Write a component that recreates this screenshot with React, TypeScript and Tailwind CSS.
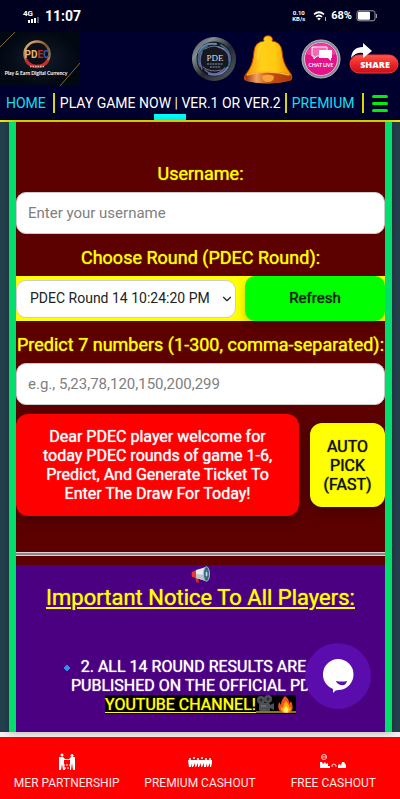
import React from "react";
import { ChevronDown } from "lucide-react";

function StatusBar() {
  return (
    <div className="flex h-8 items-center justify-between bg-[#00001f] pl-[23px] pr-[22px] text-white">
      <div className="flex items-center gap-1">
        <svg width="18" height="15" viewBox="0 0 18 15" role="img" aria-label="4G signal">
          <text x="0" y="7" fill="#fff" fontSize="8" fontWeight="700" fontFamily="Roboto, sans-serif">4G</text>
          <path d="M5 11h2v3H5zM8 10h2v4H8zM11 9h2v5h-2z" fill="#fff" />
          <path d="M14 8h2v6h-2z" fill="#55556a" />
        </svg>
        <span className="text-[14px] font-bold leading-4">11:07</span>
      </div>
      <div className="flex items-center gap-1">
        <div className="text-center text-[6px] font-bold leading-[6px]">
          0.10<br />KB/s
        </div>
        <svg width="14" height="12" viewBox="0 0 14 12" className="ml-1">
          <g fill="none" stroke="#fff" strokeWidth="1.7">
            <path d="M1 4.3Q6 .2 11 4.3" />
            <path d="M3 6.8Q6 4.2 9 6.8" />
          </g>
          <path d="M4.2 8.4Q6 7 7.8 8.4L6 10.5z" fill="#fff" />
          <path d="M12.5 7v4" stroke="#aab" strokeWidth="1" fill="none" />
        </svg>
        <span className="text-[11px] font-bold leading-4">68%</span>
        <svg width="22" height="12" viewBox="0 0 22 12">
          <rect x="1" y=".8" width="18" height="10" rx="2" fill="none" stroke="#9c9cab" />
          <rect x="2" y="1.8" width="12" height="8" rx="1" fill="#fff" />
          <path d="M20.5 4v4" stroke="#9c9cab" />
        </svg>
      </div>
    </div>
  );
}

function Logo() {
  return (
    <svg width="80" height="54" viewBox="0 0 80 54" role="img" aria-label="PDEC Play and Earn Digital Currency">
      <defs>
        <radialGradient id="logoBg">
          <stop offset="0" stopColor="#111c2b" />
          <stop offset="1" stopColor="#020812" />
        </radialGradient>
        <linearGradient id="gold" x1="0" y1="0" x2="1" y2="1">
          <stop offset="0" stopColor="#f5c777" />
          <stop offset=".5" stopColor="#80532c" />
          <stop offset="1" stopColor="#d09a50" />
        </linearGradient>
      </defs>
      <rect width="80" height="54" fill="url(#logoBg)" />
      <path d="M0 15L15 0M60 54L80 31" stroke="#8a7436" strokeWidth=".9" />
      <circle cx="37" cy="22" r="12.5" fill="#0a0e18" stroke="url(#gold)" strokeWidth="2.4" />
      <path d="M26 28a12.5 12.5 0 0 0 22 0" fill="none" stroke="#c62a2a" strokeWidth="3.5" />
      <path d="M30 34.5h14" stroke="#e5b9a0" strokeWidth="1.4" strokeDasharray="1.5 1" />
      <text x="37" y="26" textAnchor="middle" fontSize="10" fontWeight="700" fontFamily="Roboto, sans-serif" fill="#e3b778">
        PD<tspan fill="#c92d22">E</tspan><tspan fill="#3c5ba0">C</tspan>
      </text>
      <text x="36" y="43" textAnchor="middle" fontSize="5" fontWeight="700" fontFamily="Lato, sans-serif" fill="#fff">
        Play &amp; Earn Digital Currency
      </text>
    </svg>
  );
}

function CoinIcon() {
  return (
    <svg width="46" height="46" viewBox="0 0 46 46">
      <defs>
        <linearGradient id="coin" x1="0" y1="0" x2="1" y2="1">
          <stop offset="0" stopColor="#3c4148" />
          <stop offset=".25" stopColor="#858b91" />
          <stop offset=".55" stopColor="#25292f" />
          <stop offset="1" stopColor="#5c6167" />
        </linearGradient>
      </defs>
      <circle cx="23" cy="23" r="22" fill="url(#coin)" />
      <circle cx="23" cy="23" r="17.5" fill="#15181f" />
      <g fill="none" strokeLinecap="round">
        <path d="M8 17Q12 6 25 8M37 31Q31 41 18 38" stroke="#6686ae" strokeWidth="2" />
        <path d="M9 30Q4 17 16 10M30 9Q42 16 38 29" stroke="#376d83" strokeWidth="2" />
        <path d="M11 33Q7 24 11 16M27 11Q39 14 38 25M14 34Q24 43 34 32" stroke="#7462a7" strokeWidth="1.4" />
        <path d="M12 31Q19 37 30 34M14 13Q23 7 33 13" stroke="#8fa0b4" strokeWidth=".7" />
      </g>
      <text x="24" y="25" textAnchor="middle" fontSize="9" fontFamily="Liberation Serif, serif" fill="#d8dee6">PDE</text>
      <path d="M16 28h16M19 31h10" stroke="#8b96a8" strokeWidth="1.2" strokeDasharray="2 .7" />
    </svg>
  );
}

function BellIcon() {
  return (
    <svg width="50" height="50" viewBox="0 0 50 50">
      <defs>
        <linearGradient id="bell">
          <stop offset="0" stopColor="#f28a00" />
          <stop offset=".35" stopColor="#ffcf17" />
          <stop offset=".65" stopColor="#ffca12" />
          <stop offset="1" stopColor="#ef8b00" />
        </linearGradient>
        <linearGradient id="rim">
          <stop offset="0" stopColor="#9b2b06" />
          <stop offset=".25" stopColor="#f1a35d" />
          <stop offset=".5" stopColor="#c65214" />
          <stop offset="1" stopColor="#ac3605" />
        </linearGradient>
      </defs>
      <path d="M21 7C18 0 32 0 29 7Q38 8 39 17C40 29 43 33 48 40Q50 43 48 46Q25 52 2 46Q0 43 3 40C8 33 10 29 11 17Q12 8 21 7Z" fill="url(#bell)" stroke="#bd3909" strokeWidth="1" />
      <path d="M2 42Q5 38 25 38T48 42Q49 45 46 47Q25 52 3 47Z" fill="url(#rim)" />
      <path d="M4 41Q25 35 46 41" stroke="#ffb62a" strokeWidth="1.5" fill="none" />
      <path d="M19 42Q25 39 31 42Q31 48 25 48T19 42Z" fill="#f5a336" />
      <path d="M19 11Q15 14 15 25" stroke="#ffe35a" strokeWidth="2" fill="none" opacity=".5" />
    </svg>
  );
}

function ChatLiveIcon() {
  return (
    <svg width="40" height="40" viewBox="0 0 40 40">
      <circle cx="20" cy="20" r="19" fill="#858991" stroke="#b9bcc4" strokeWidth="1" />
      <circle cx="20" cy="20" r="16.5" fill="#e51289" stroke="#e9d6e2" strokeWidth=".8" />
      <path d="M5 15a16 16 0 0 1 30 0Q20 20 5 15" fill="#fa65b2" opacity=".55" />
      <path d="M11 8h15v9H16l-3 3v-3h-2z" fill="#f06ab4" stroke="#fff" strokeWidth="1" />
      <path d="M18 11h13v8h-1v3l-3-3h-9z" fill="#fff" />
      <text x="20" y="28" textAnchor="middle" fontSize="5" fontWeight="700" fontFamily="Lato, sans-serif" fill="#fff">CHAT LIVE</text>
    </svg>
  );
}

function ShareIcon() {
  return (
    <svg width="50" height="32" viewBox="0 0 50 32">
      <defs>
        <linearGradient id="share" x1="0" y1="0" x2="0" y2="1">
          <stop offset="0" stopColor="#ff5848" />
          <stop offset=".5" stopColor="#ee2527" />
          <stop offset="1" stopColor="#be141b" />
        </linearGradient>
      </defs>
      <rect x="1" y="12" width="48" height="18" rx="9" fill="url(#share)" stroke="#fa3938" />
      <path d="M2 15Q3 4 14 4V0l9 8-9 7v-5Q7 9 2 15z" fill="#fff" />
      <text x="26" y="25" textAnchor="middle" fontSize="9" fontWeight="900" fontFamily="Open Sans, sans-serif" fill="#fff">SHARE</text>
    </svg>
  );
}

function Header() {
  return (
    <header className="border-b-2 border-[#e8e800] bg-[#00002e] text-white">
      <div className="flex h-[54px] justify-between">
        <a href="#home"><Logo /></a>
        <div className="flex items-center">
          <a href="#coin" aria-label="PDE coin" className="mr-[6px]"><CoinIcon /></a>
          <a href="#alerts" aria-label="Notifications" className="mr-[8px]"><BellIcon /></a>
          <a href="#chat" aria-label="Chat live" className="mr-2"><ChatLiveIcon /></a>
          <a href="#share" aria-label="Share" className="mr-px"><ShareIcon /></a>
        </div>
      </div>
      <nav className="relative flex h-[34px] items-center pl-[6px] pr-3 text-[14px] leading-5">
        <a href="#home" className="border-r-2 border-[#d8d800] pr-[7px] text-[#16dfef]">HOME</a>
        <a href="#play" className="whitespace-nowrap border-r-2 border-[#d8d800] pl-[5px] pr-1">PLAY GAME NOW | VER.1 OR VER.2</a>
        <a href="#premium" className="border-r-2 border-[#d8d800] pl-[5px] pr-2 text-[#16dfef]">PREMIUM</a>
        <button aria-label="Menu" className="ml-auto flex flex-col gap-1">
          <span className="h-[3px] w-4 rounded bg-[#00f000]" />
          <span className="h-[3px] w-4 rounded bg-[#00f000]" />
          <span className="h-[3px] w-4 rounded bg-[#00f000]" />
        </button>
        <span className="absolute bottom-0 left-[154px] h-[6px] w-8 bg-[#00ffff]" />
      </nav>
    </header>
  );
}

const labelClass = "block whitespace-nowrap text-center text-[18px] leading-6 text-[#ffff00] [text-shadow:0_0_1px_#ffff00]";
const inputClass = "block h-[42px] w-full rounded-[10px] border border-[#ccc] bg-white px-[11px] text-[15px] text-[#222] placeholder:text-[#808080]";

function GameForm() {
  return (
    <form className="flex flex-col pt-[39px]">
      <label htmlFor="username" className={labelClass}>Username:</label>
      <input id="username" className={inputClass + " mt-[6px]"} placeholder="Enter your username" />
      <label htmlFor="round" className={labelClass + " mt-3"}>Choose Round (PDEC Round):</label>
      <div className="mt-[6px] flex items-center gap-[9px] bg-[#ffff00]">
        <div className="relative min-w-0 flex-[220]">
          <select id="round" className="block h-[38px] w-full appearance-none rounded-[10px] border border-[#ccc] bg-white pl-[13px] text-[14px] text-[#222]">
            <option>PDEC Round 14 10:24:20 PM</option>
          </select>
          <ChevronDown className="pointer-events-none absolute right-[2px] top-3 text-[#222]" size={14} />
        </div>
        <button type="button" className="h-[45px] flex-[140] rounded-[10px] bg-[#00ff00] text-[15px] text-[#102010] shadow-[0_4px_10px_rgba(0,0,0,0.2)] [text-shadow:0_0_1px_#102010]">
          Refresh
        </button>
      </div>
      <label htmlFor="numbers" className={labelClass + " mt-3"}>Predict 7 numbers (1-300, comma-separated):</label>
      <input id="numbers" className={inputClass + " mt-[6px]"} placeholder="e.g., 5,23,78,120,150,200,299" />
      <div className="mt-[9px] flex items-center gap-[11px] text-center text-[16px] leading-[19px]">
        <button type="button" className="h-[102px] flex-1 rounded-[12px] bg-[#ff0000] px-5 text-white shadow-[0_4px_12px_rgba(0,0,0,0.3)] [text-shadow:0_0_1px_#fff]">
          Dear PDEC player welcome for today PDEC rounds of game 1-6, Predict, And Generate Ticket To Enter The Draw For Today!
        </button>
        <button type="button" className="h-[84px] w-[75px] rounded-[12px] bg-[#ffff00] px-2 text-[#111] shadow-[0_4px_12px_rgba(0,0,0,0.3)] [text-shadow:0_0_1px_#111]">
          AUTO PICK (FAST)
        </button>
      </div>
    </form>
  );
}

function Megaphone() {
  return (
    <svg width="20" height="18" viewBox="0 0 20 18">
      <path d="M4 10l1 6 3 1-1-7z" fill="#d42b2b" />
      <path d="M1 6Q0 8 1 11l4 1V4z" fill="#e53935" />
      <path d="M5 4L15 1v14L5 12z" fill="#e6eaed" />
      <path d="M5 8l10 1v6L5 12z" fill="#bcc4c9" />
      <ellipse cx="15.5" cy="8" rx="3" ry="7.3" fill="#37677c" stroke="#a6bbc5" />
      <ellipse cx="15.5" cy="8" rx="1" ry="2.5" fill="#b5d5e0" />
    </svg>
  );
}

function CameraAndFire() {
  return (
    <svg width="40" height="19" viewBox="0 0 40 19" className="inline-block align-top">
      <g fill="#4d5155">
        <circle cx="5" cy="5" r="4" />
        <circle cx="12" cy="4" r="4" />
        <rect x="3" y="8" width="11" height="8" rx="1.5" />
        <path d="M14 10l4-2v7l-4-2z" />
      </g>
      <circle cx="5" cy="5" r="1.5" fill="#25282b" />
      <circle cx="12" cy="4" r="1.5" fill="#25282b" />
      <path d="M5 11h5" stroke="#82878b" />
      <path d="M0 17h40" stroke="#ffff00" />
      <path d="M29 1q5 4 4 8l2-3q5 12-5 12T23 7l2 3q0-5 4-9z" fill="#f4511e" />
      <path d="M30 6q4 5 3 7l2-1q0 6-5 6t-5-6l2 1q0-4 3-7z" fill="#ffb300" />
      <path d="M30 11q4 4 1 6.5-5 0-3-4z" fill="#fff176" />
    </svg>
  );
}

function Notice() {
  return (
    <section className="flex flex-1 flex-col items-center bg-[#4b0082] text-center">
      <div className="flex h-5 items-center"><Megaphone /></div>
      <h2 className="text-[22px] leading-[26px] text-[#ffff00] underline decoration-2 underline-offset-2 [text-shadow:0_0_1px_#ffff00]">
        Important Notice To All Players:
      </h2>
      <p className="mt-[46px] whitespace-nowrap text-[16px] leading-[19px] text-white [text-shadow:0_0_1px_#fff]">
        <span className="pr-8">
          <svg width="8" height="8" viewBox="0 0 8 8" className="mr-[10px] inline-block align-middle">
            <path d="M4 1l3 3-3 3-3-3z" fill="#2f8ff0" stroke="#2f8ff0" strokeLinejoin="round" />
          </svg>
          2. ALL 14 ROUND RESULTS ARE
        </span>
        <br />
        PUBLISHED ON THE OFFICIAL PDEC<br />
        <a href="#youtube" className="inline-block bg-black text-[#ffff00] underline underline-offset-2 [text-shadow:0_0_1px_#ffff00]">
          YOUTUBE CHANNEL!<CameraAndFire />
        </a>
      </p>
    </section>
  );
}

function ChatWidget() {
  return (
    <button aria-label="Open chat" className="absolute bottom-[23px] right-[29px] flex size-[66px] items-center justify-center rounded-full bg-[#5a0cac]">
      <svg width="34" height="36" viewBox="0 0 34 36">
        <path d="M17 1a15.5 15.5 0 0 1 0 31q-3 0-5 3v-4A15.5 15.5 0 0 1 17 1z" fill="#fff" />
        <path d="M15 23q6 1 11 0-1 5-6 4-4-1-5-4z" fill="#5a0cac" />
      </svg>
    </button>
  );
}

function HandshakeIcon() {
  return (
    <svg width="18" height="18" viewBox="0 0 18 18" fill="#fff">
      <circle cx="4" cy="2" r="1.5" />
      <circle cx="14" cy="2.5" r="1.5" />
      <path d="M1 4h4l2 2h4l2-2h4v13h-2l-1-7-1 7h-1V7H6v4l1 6H5l-1-6-1 6H1z" />
      <path d="M5 12h8M6 15h5" stroke="#fff" strokeDasharray="2 1" />
    </svg>
  );
}

function CrowdIcon() {
  return (
    <svg width="26" height="18" viewBox="0 0 26 18" fill="#fff">
      <circle cx="3" cy="6" r="1" /><circle cx="7" cy="5" r="1" /><circle cx="11" cy="6" r="1" />
      <circle cx="15" cy="5" r="1" /><circle cx="19" cy="6" r="1" /><circle cx="23" cy="6" r="1" />
      <path d="M1 7h24v3l-1 4h-1v-4l-2 4h-1v-4l-1 4h-2v-4l-2 4h-1v-4l-2 4h-1v-4l-2 4H8v-4l-2 4H5v-4l-1 4H2z" />
    </svg>
  );
}

function CashDeskIcon() {
  return (
    <svg width="28" height="18" viewBox="0 0 28 18" fill="#fff">
      <circle cx="5" cy="4" r="2.5" fill="none" stroke="#fff" strokeWidth=".8" />
      <path d="M3 4h4" stroke="#fff" strokeWidth=".8" />
      <path d="M1 9h2l1 2 2-2 1 2 2-1v3h2v2H1zM19 15v-3l2-1 1 2 1-4h2l2 3v3z" />
      <path d="M13 14v-2l2-1 2 1v2" stroke="#fff" strokeWidth=".8" fill="none" />
    </svg>
  );
}

function Footer() {
  const items = [
    { label: "MER PARTNERSHIP", Icon: HandshakeIcon },
    { label: "PREMIUM CASHOUT", Icon: CrowdIcon },
    { label: "FREE CASHOUT", Icon: CashDeskIcon },
  ];
  return (
    <footer className="flex h-[67px] border-t-[5px] border-[#f5f0f2] bg-[#ff0000]">
      {items.map(({ label, Icon }) => (
        <a key={label} href="#section" className="flex flex-1 flex-col items-center gap-1 whitespace-nowrap pt-4 text-[12px] leading-4 text-[#ffe9e9]">
          <Icon />
          {label}
        </a>
      ))}
    </footer>
  );
}

export default function App() {
  return (
    <div className="flex h-screen flex-col overflow-hidden font-['Roboto',sans-serif]">
      <StatusBar />
      <Header />
      <div className="relative flex min-h-0 flex-1 bg-[#24404e] pl-[9px] pr-2">
        <main className="flex min-w-0 flex-1 flex-col overflow-hidden border-x-[7px] border-[#00df6c] bg-[#5c0000] pt-px shadow-[0_0_8px_rgba(0,0,0,0.3)]">
          <GameForm />
          <hr className="mb-[9px] mt-9 h-1 border-y border-[#d8d0d0] bg-[#888]" />
          <Notice />
        </main>
        <ChatWidget />
      </div>
      <Footer />
    </div>
  );
}
